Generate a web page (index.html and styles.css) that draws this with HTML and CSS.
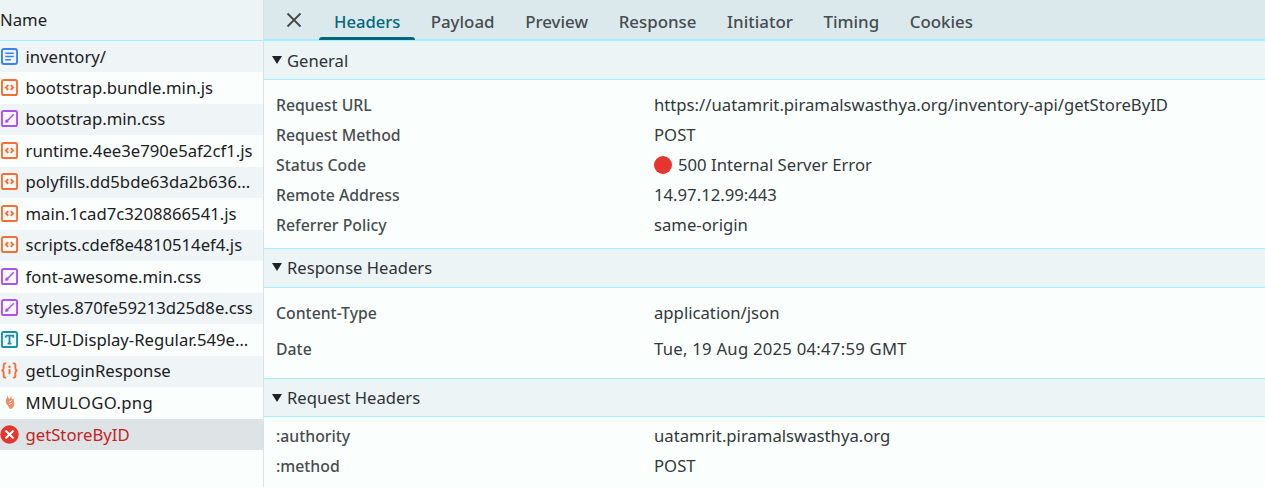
FILE: index.html
```html
<!DOCTYPE html>
<html lang="en">
<head>
<meta charset="utf-8">
<title>Network</title>
<link rel="stylesheet" href="styles.css">
</head>
<body>
<svg class="defs" width="0" height="0" aria-hidden="true">
  <symbol id="i-js" viewBox="0 0 18 18"><rect x="1" y="1" width="16" height="16" rx="2" fill="#fff8f3" stroke="#f0703a" stroke-width="2"/><path d="M7.600 6.400 5.200 9l2.400 2.600M10.400 6.400 12.800 9l-2.400 2.600" fill="none" stroke="#f0703a" stroke-width="2"/></symbol>
  <symbol id="i-css" viewBox="0 0 18 18"><rect x="1" y="1" width="16" height="16" rx="2" fill="#fbf6ff" stroke="#a952ee" stroke-width="2"/><path d="M13.500 4.500 7.500 10.500" stroke="#a952ee" stroke-width="1.600"/><path d="M4.500 13.500v-2.300L6.400 9.600 8.400 11.600 6.800 13.500z" fill="#a952ee"/></symbol>
</svg>
<main class="app">
  <section class="names">
    <header class="names-head">Name</header>
    <ul class="list">
      <li class="row"><svg class="ic" viewBox="0 0 18 18"><rect x="1" y="1" width="16" height="16" rx="2.400" fill="#eef5ff" stroke="#3b82f0" stroke-width="2"/><path d="M4.500 5.500h9M4.500 9h9M4.500 12.500h6" stroke="#3b82f0" stroke-width="1.700"/></svg><span class="fname">inventory/</span></li>
      <li class="row"><svg class="ic"><use href="#i-js"/></svg><span class="fname">bootstrap.bundle.min.js</span></li>
      <li class="row"><svg class="ic"><use href="#i-css"/></svg><span class="fname">bootstrap.min.css</span></li>
      <li class="row"><svg class="ic"><use href="#i-js"/></svg><span class="fname">runtime.4ee3e790e5af2cf1.js</span></li>
      <li class="row"><svg class="ic"><use href="#i-js"/></svg><span class="fname">polyfills.dd5bde63da2b636…</span></li>
      <li class="row"><svg class="ic"><use href="#i-js"/></svg><span class="fname">main.1cad7c3208866541.js</span></li>
      <li class="row"><svg class="ic"><use href="#i-js"/></svg><span class="fname">scripts.cdef8e4810514ef4.js</span></li>
      <li class="row"><svg class="ic"><use href="#i-css"/></svg><span class="fname">font-awesome.min.css</span></li>
      <li class="row"><svg class="ic"><use href="#i-css"/></svg><span class="fname">styles.870fe59213d25d8e.css</span></li>
      <li class="row"><svg class="ic" viewBox="0 0 18 18"><rect x="1" y="1" width="16" height="16" rx="2" fill="#eefafc" stroke="#1d8ea8" stroke-width="2"/><path d="M5 5h8v2.200M9 5v8.400M7 13.400h4M5 5v2.200" fill="none" stroke="#1d8ea8" stroke-width="1.900"/></svg><span class="fname">SF-UI-Display-Regular.549e…</span></li>
      <li class="row"><svg class="ic" viewBox="0 0 18 18"><path d="M5.500 1.500H4.400C3.100 1.500 2.800 2.400 2.800 3.400v3.200C2.800 7.900 2 8.700.8 9c1.200.3 2 1.100 2 2.400v3.200c0 1 .3 1.900 1.600 1.900h1.100M12.500 1.500h1.100c1.300 0 1.600.9 1.600 1.900v3.200c0 1.300.8 2.100 2 2.400-1.200.3-2 1.100-2 2.400v3.200c0 1-.3 1.900-1.600 1.900h-1.100" fill="none" stroke="#f0703a" stroke-width="2"/><path d="M9 7.500v5.500" stroke="#f0703a" stroke-width="2"/><circle cx="9" cy="5" r="1.300" fill="#f0703a"/></svg><span class="fname">getLoginResponse</span></li>
      <li class="row"><svg class="ic" viewBox="0 0 18 18"><path d="M7.500 1c-.8 2 .6 3 1.200 4.500L11 2c-.3 1.800.2 2.800.8 3.800L14 4.500c-.8 1.700-.4 3-.1 4.300.7 3-.8 6.500-3.700 7.200-1.500-.6-2-1.700-2.500-2.900C6.400 11.400 4.800 9.800 5 7.500 5.200 5 6.900 3.300 7.500 1z" fill="#f08a6a"/><path d="M9 8.500 11.200 6.800M8.500 11.200l3.200-1.700" stroke="#fff" stroke-width="1"/></svg><span class="fname fname-caps">MMULOGO.png</span></li>
      <li class="row row-sel"><svg class="ic ic-err" viewBox="0 0 20 20"><circle cx="10" cy="10" r="9.700" fill="#e5352f"/><path d="m6.500 6.500 7 7m0-7-7 7" stroke="#fff" stroke-width="2.200" stroke-linecap="round"/></svg><span class="fname fname-err">getStoreByID</span></li>
    </ul>
  </section>
  <section class="detail">
    <nav class="tabs">
      <svg class="close" viewBox="0 0 16 16"><path d="m1.500 1.500 13 13m0-13-13 13" stroke="#474747" stroke-width="1.800" fill="none"/></svg>
      <span class="tab tab-on">Headers</span>
      <span class="tab">Payload</span>
      <span class="tab">Preview</span>
      <span class="tab">Response</span>
      <span class="tab">Initiator</span>
      <span class="tab">Timing</span>
      <span class="tab">Cookies</span>
    </nav>
    <h2 class="sec-head"><span class="tri"></span>General</h2>
    <dl class="props props-gen">
      <div class="prop"><dt>Request URL</dt><dd>https://uatamrit.piramalswasthya.org/inventory-api/getStoreByID</dd></div>
      <div class="prop"><dt>Request Method</dt><dd>POST</dd></div>
      <div class="prop"><dt>Status Code</dt><dd><span class="dot"></span>500 Internal Server Error</dd></div>
      <div class="prop"><dt>Remote Address</dt><dd>14.97.12.99:443</dd></div>
      <div class="prop"><dt>Referrer Policy</dt><dd>same-origin</dd></div>
    </dl>
    <h2 class="sec-head sec-head-mid"><span class="tri"></span>Response Headers</h2>
    <dl class="props props-res">
      <div class="prop prop-tall"><dt>Content-Type</dt><dd>application/json</dd></div>
      <div class="prop prop-tall"><dt>Date</dt><dd class="dd-date">Tue, 19 Aug 2025 04:47:59 GMT</dd></div>
    </dl>
    <h2 class="sec-head sec-head-last"><span class="tri"></span>Request Headers</h2>
    <dl class="props props-req">
      <div class="prop"><dt>:authority</dt><dd>uatamrit.piramalswasthya.org</dd></div>
      <div class="prop"><dt>:method</dt><dd>POST</dd></div>
    </dl>
  </section>
</main>
</body>
</html>
```
FILE: styles.css
```css
* { box-sizing: border-box; }
html, body { margin: 0; height: 100%; }
body {
  background: #fafffe;
  font-family: "Noto Sans", "Open Sans", sans-serif;
  font-size: 16.7px;
  color: #1f2326;
  overflow: hidden;
}
.defs { position: absolute; }
.app { display: flex; height: 487px; }

.names { width: 264px; flex: none; border-right: 1px solid #d9e3e6; }
.names-head {
  height: 41px;
  padding-top: 9px;
  background: #edf4f6;
  border-bottom: 1px solid #a0f0ff;
  line-height: 22px;
}
.list { margin: -0.5px 0 0; padding: 0; list-style: none; }
.row {
  display: flex;
  align-items: center;
  gap: 8px;
  height: 31.5px;
  padding-left: 0.5px;
  padding-bottom: 0.6px;
  white-space: nowrap;
  color: #1b2023;
}
.row:first-child, .row:last-child { padding-bottom: 0; }
.row:nth-child(odd) { background: #eff5f7; }
.row-sel, .row-sel:nth-child(odd) { background: #dee3e6; }
.ic { width: 17px; height: 17px; flex: none; }
.ic-err { width: 19px; height: 19px; margin-left: -1px; margin-right: -1px; }
.fname { display: block; }
.fname-err { color: #c5221f; }
.fname-caps { letter-spacing: 0.35px; }

.detail { flex: 1; min-width: 0; }
.tabs {
  display: flex;
  align-items: center;
  height: 41px;
  padding-left: 22px;
  background: #dbe9ed;
  border-bottom: 2px solid #a0f0ff;
}
.close { width: 16px; height: 16px; flex: none; margin-right: 17px; }
.tab {
  position: relative;
  padding: 0 15.3px;
  height: 39px;
  line-height: 44px;
  font-size: 16.9px;
  color: #474c50;
  font-weight: 500;
}
.tab-on { color: #00687b; padding: 0 15px; font-size: 16.6px; }
.tab-on::after {
  content: "";
  position: absolute;
  left: 0;
  right: 0;
  bottom: -1px;
  height: 3px;
  border-radius: 3px 3px 0 0;
  background: #00687b;
}
.sec-head {
  display: flex;
  align-items: center;
  gap: 5px;
  height: 39px;
  margin: 0;
  padding-left: 8px;
  background: #edf4f6;
  border-bottom: 1px solid #a0f0ff;
  font-size: 16.6px;
  font-weight: 400;
  color: #2d3235;
}
.sec-head-mid { padding-bottom: 2px; }
.sec-head-last { height: 38px; }
.tri {
  width: 0;
  height: 0;
  border-left: 5px solid transparent;
  border-right: 5px solid transparent;
  border-top: 8px solid #1f2326;
}
.props { margin: 0; border-bottom: 1px solid #a0f0ff; }
.props-gen { height: 169px; padding-top: 10px; }
.props-res { height: 91px; padding-top: 7px; }
.props-req { border-bottom: 0; padding-top: 4px; }
.prop {
  display: flex;
  align-items: center;
  height: 30px;
  padding-left: 12px;
}
.prop-tall { height: 36px; }
dt { width: 378px; flex: none; font-size: 15.8px; font-weight: 500; color: #474c50; }
dd { margin: 0; padding-bottom: 2px; display: flex; align-items: center; color: #33383b; white-space: nowrap; }
.dd-date { letter-spacing: 0.25px; }
.dot {
  width: 18px;
  height: 18px;
  margin-right: 6px;
  margin-top: 2px;
  border-radius: 50%;
  background: #e5352f;
}
```
